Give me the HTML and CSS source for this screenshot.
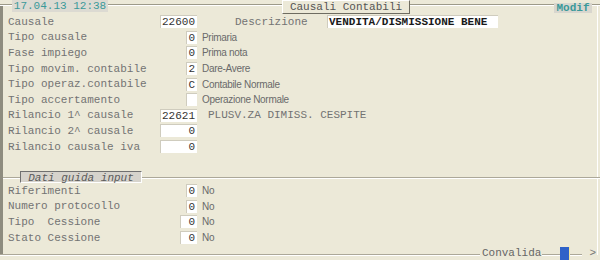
FILE: index.html
```html
<!DOCTYPE html>
<html lang="it">
<head>
<meta charset="UTF-8">
<title>Causali Contabili</title>
<link rel="stylesheet" href="styles.css">
</head>
<body>
<div class="screen">
    <div class="top">
        <div class="date">17.04.13 12:38</div>
        <div class="title">Causali Contabili</div>
        <div class="modif">Modif</div>
    </div>

    <div class="form">
        <div class="row">
            <span class="lbl">Causale</span>
            <span class="box w">22600</span>
            <span class="extra">
                <span class="lbl desc-lbl">Descrizione</span>
                <span class="box desc">VENDITA/DISMISSIONE BENE</span>
            </span>
        </div>
        <div class="row">
            <span class="lbl">Tipo causale</span>
            <span class="box s">0</span>
            <span class="note">Primaria</span>
        </div>
        <div class="row">
            <span class="lbl">Fase impiego</span>
            <span class="box s">0</span>
            <span class="note">Prima nota</span>
        </div>
        <div class="row">
            <span class="lbl">Tipo movim. contabile</span>
            <span class="box s">2</span>
            <span class="note">Dare-Avere</span>
        </div>
        <div class="row">
            <span class="lbl">Tipo operaz.contabile</span>
            <span class="box s">C</span>
            <span class="note">Contabile Normale</span>
        </div>
        <div class="row">
            <span class="lbl">Tipo accertamento</span>
            <span class="box s"></span>
            <span class="note">Operazione Normale</span>
        </div>
        <div class="row">
            <span class="lbl">Rilancio 1^ causale</span>
            <span class="box w">22621</span>
            <span class="lbl linked">PLUSV.ZA DIMISS. CESPITE</span>
        </div>
        <div class="row">
            <span class="lbl">Rilancio 2^ causale</span>
            <span class="box w">0</span>
        </div>
        <div class="row">
            <span class="lbl">Rilancio causale iva</span>
            <span class="box w">0</span>
        </div>
    </div>

    <div class="section"><span class="legend">Dati guida input</span></div>

    <div class="form">
        <div class="row">
            <span class="lbl">Riferimenti</span>
            <span class="box s">0</span>
            <span class="note">No</span>
        </div>
        <div class="row">
            <span class="lbl">Numero protocollo</span>
            <span class="box s">0</span>
            <span class="note">No</span>
        </div>
        <div class="row">
            <span class="lbl">Tipo  Cessione</span>
            <span class="box m">0</span>
            <span class="note">No</span>
        </div>
        <div class="row">
            <span class="lbl">Stato Cessione</span>
            <span class="box m">0</span>
            <span class="note">No</span>
        </div>
    </div>

    <div class="bottom">
        <span class="rule grow"></span>
        <span class="cmd">Convalida</span>
        <span class="rule r1"></span>
        <span class="knob"></span>
        <span class="rule r2"></span>
        <span class="arrow">&gt;</span>
    </div>
</div>
</body>
</html>
```

FILE: styles.css
```css
html, body {
    margin:0; padding:0;
    background:#ece9d8;
}
body {
    width:600px; height:260px; overflow:hidden;
    font-family:"Liberation Mono", monospace; font-size:11px;
}
.screen {
    height:260px;
    display:flex; flex-direction:column;
    background:
        linear-gradient(#8e8c7f, #8e8c7f) no-repeat 0 5px / 3px 250px,
        linear-gradient(#fff, #fff) no-repeat 597px 5px / 1px 250px,
        #ece9d8;
}

/* header over the frame line */
.top {
    display:flex; align-items:flex-start; height:14px;
    background:linear-gradient(to bottom, transparent 4px, #9d9a89 4px, #9d9a89 5px, #fff 5px, #fff 6px, transparent 6px);
}
.date {
    margin-left:12px; width:96px; height:12px; line-height:12px;
    background:#dcdad2; color:#3a9999; text-align:center;
}
.title {
    margin-left:174px; width:128px; height:14px; line-height:13px;
    box-sizing:border-box; text-align:center;
    border:1px solid; border-color:#fff #6e6c61 #6e6c61 #fff;
    background:#ece9d8; color:#555;
}
.modif {
    margin-left:auto; margin-right:8px; margin-top:3px;
    width:38px; height:10px; line-height:10px; text-align:center;
    background:#d8d6ce; color:#3a9999; font-weight:bold;
}

/* rows */
.form { padding-left:8px; }
.row {
    display:grid; grid-template-columns:152px 37px auto;
    height:15.6px; align-items:center;
}
.lbl { color:#737373; white-space:pre; }
.box {
    justify-self:end; height:13px; line-height:13px;
    box-sizing:border-box; padding-right:2px;
    background:#fff; color:#333; text-align:right;
    border-top:1px solid #cfccbe; border-left:1px solid #cfccbe;
}
.box.w { width:37px; }
.box.s { width:11px; }
.box.m { width:17px; }
.note {
    padding-left:5px;
    font-family:"Liberation Sans", Arial, sans-serif; font-size:10px;
    letter-spacing:-0.3px; color:#6a6a6a;
}
.extra { display:flex; align-items:center; }
.desc-lbl { margin-left:38px; width:92px; }
.box.desc {
    width:171px; text-align:left; padding-left:1px;
    color:#1a1a1a; font-weight:bold;
}
.linked { padding-left:11px; }

/* group separator */
.section {
    margin-top:16.6px; margin-left:3px; height:12px;
    display:flex; align-items:center;
    background:linear-gradient(to bottom, transparent 6px, #aca899 6px, #aca899 7px, #fff 7px, #fff 8px, transparent 8px);
}
.legend {
    margin-left:17px; width:122px; height:12px; line-height:12px;
    box-sizing:border-box; text-align:center;
    border:1px solid; border-color:#707070 #fff #fff #707070;
    background:#d6d3cc; color:#5a5a5a; font-style:italic;
}

/* command bar */
.bottom {
    margin-top:auto; height:13px;
    display:flex; align-items:flex-start;
}
.rule {
    margin-top:7px; height:1px;
    border-top:1px solid #aca899; background:#fff;
}
.rule.grow { flex:1; }
.rule.r1 { width:18px; }
.rule.r2 { width:12px; }
.cmd { margin:0 1px 0 2px; line-height:13px; color:#666; }
.knob {
    width:9px; height:13px;
    background:#2f62c8; border-right:1px solid #f3e6a0;
}
.arrow { margin:0 4px 0 7px; line-height:13px; color:#777; }
```
